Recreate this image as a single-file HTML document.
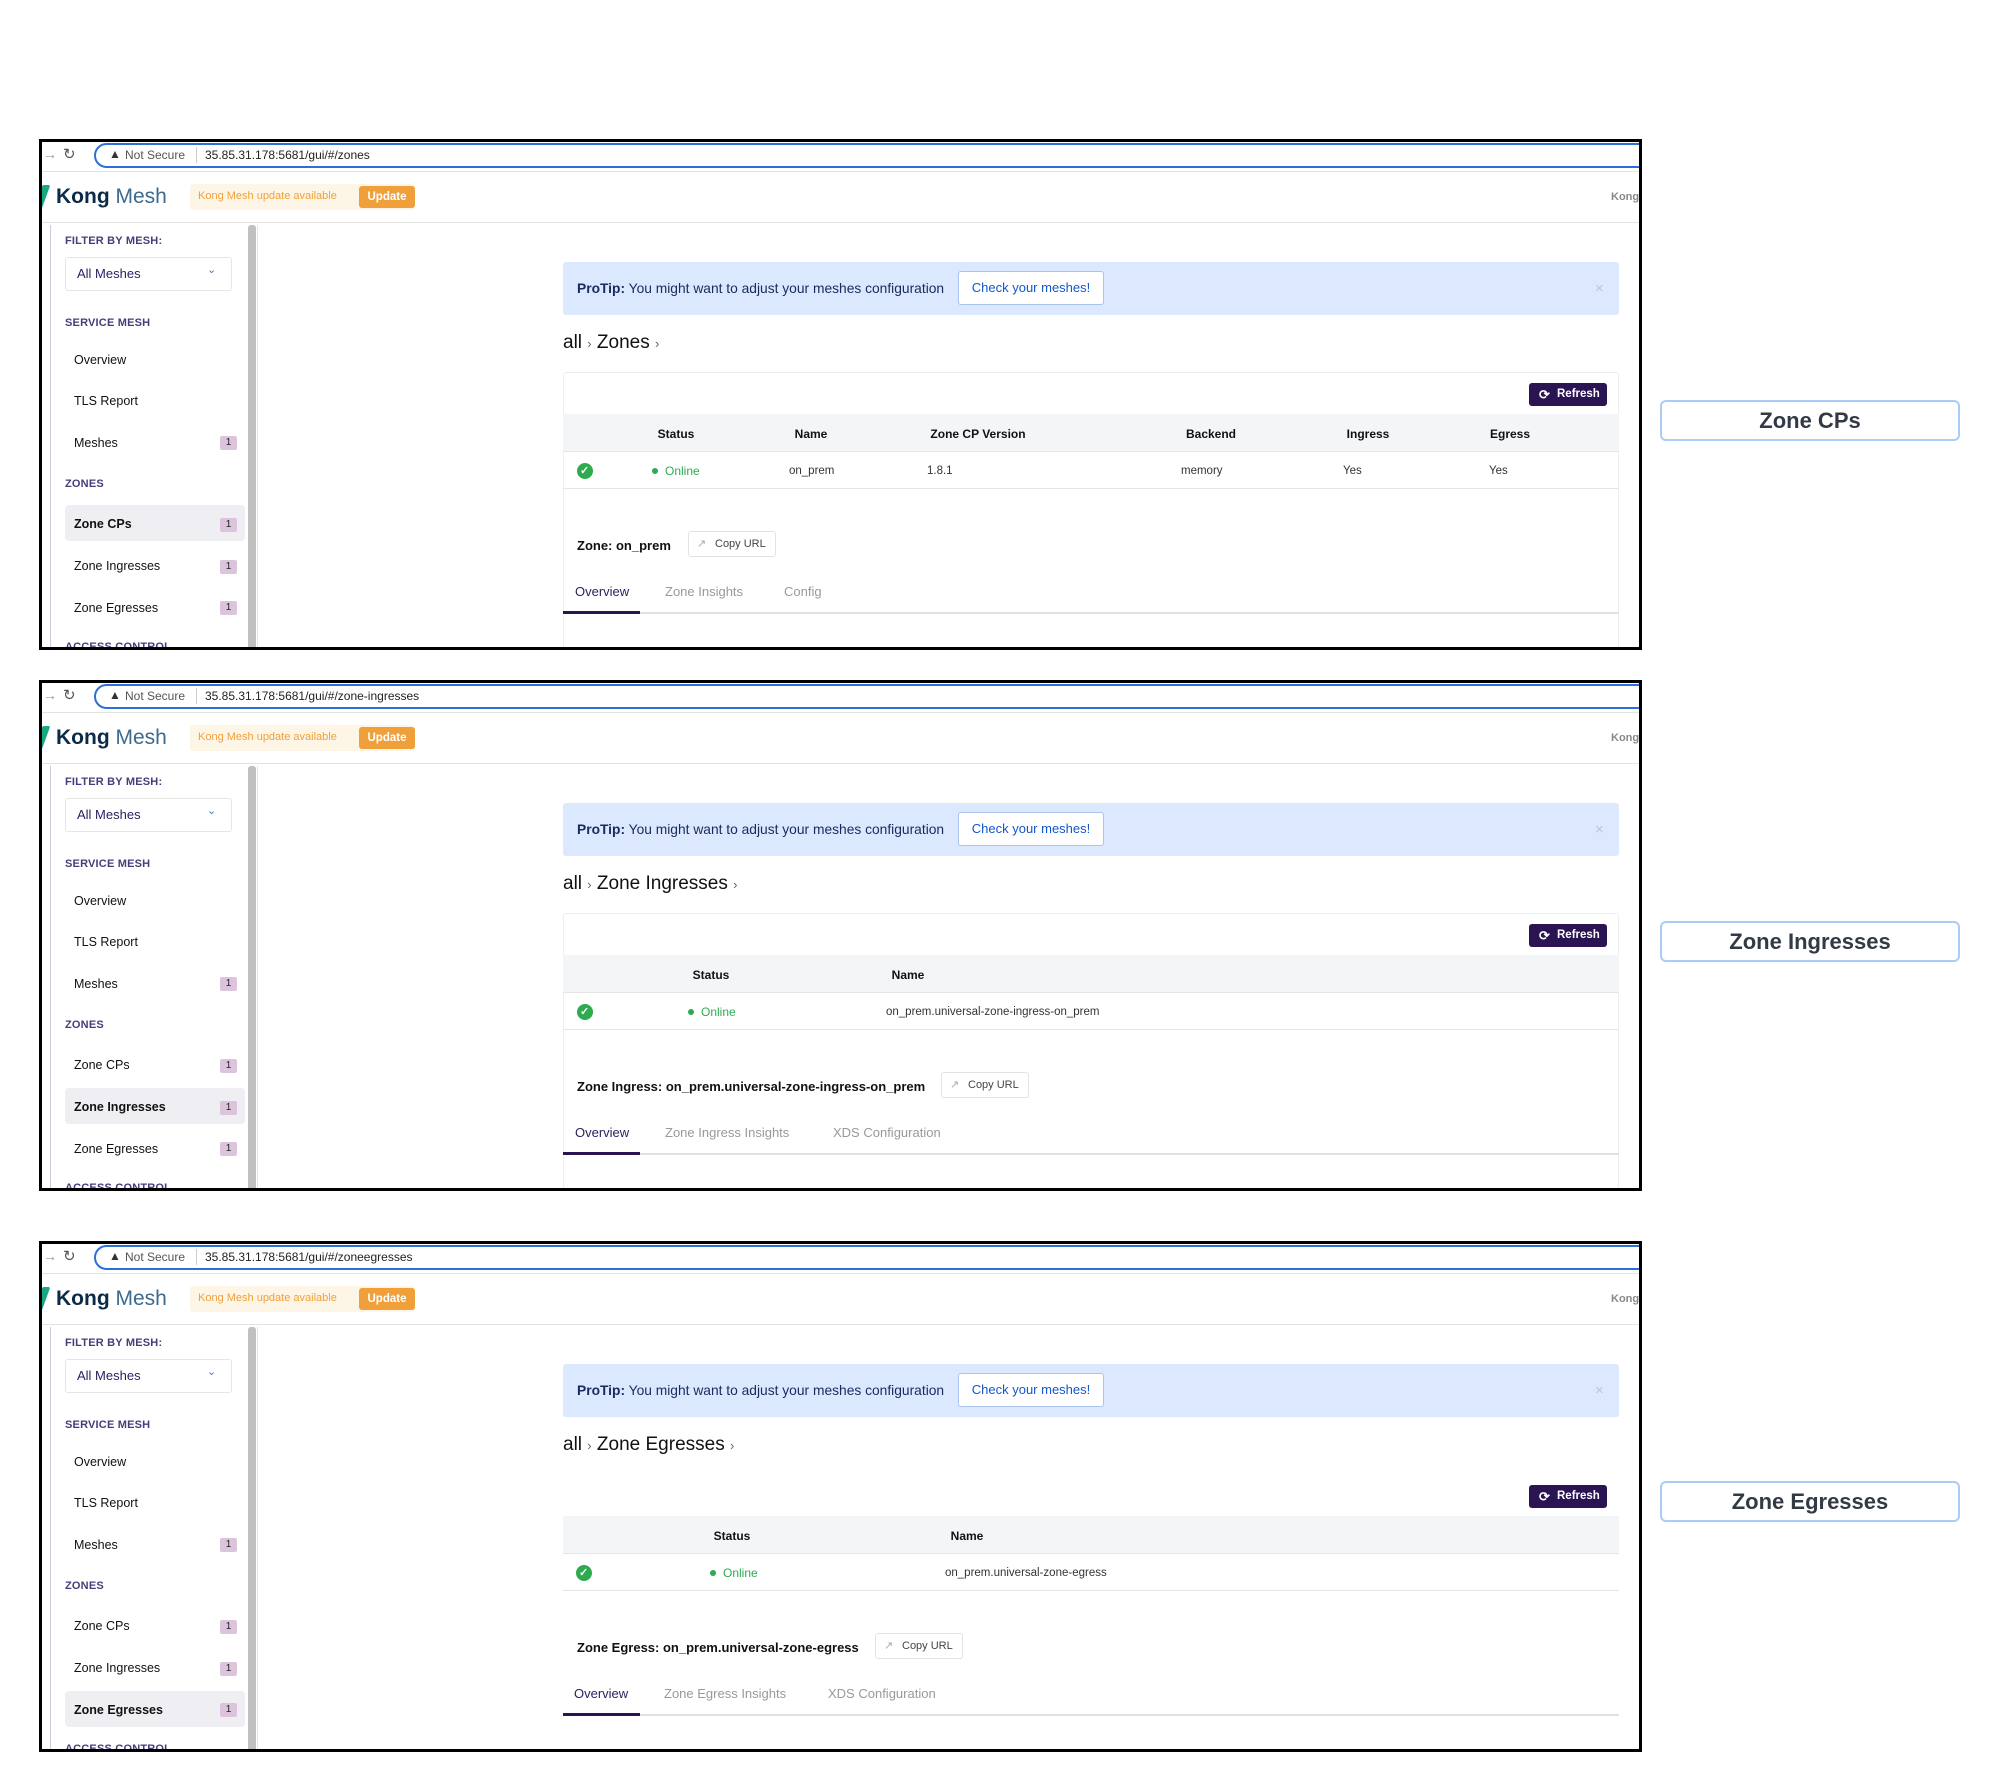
<!DOCTYPE html>
<html><head><meta charset="utf-8">
<style>
*{box-sizing:border-box;margin:0;padding:0}
html,body{width:2000px;height:1789px;background:#fff;overflow:hidden;font-family:"Liberation Sans",Arial,sans-serif;}
.p{position:absolute;left:39px;width:1603px;height:511px;background:#fff;overflow:hidden}
.p::after{content:"";position:absolute;left:0;top:0;right:0;bottom:0;border:3px solid #000;pointer-events:none}
.p > *{position:absolute;white-space:nowrap}
.ai{position:absolute}
.url{left:55px;top:4px;right:-10px;height:25px;border:2px solid #2d6fd8;border-radius:13px 0 0 13px;}
.urlt{left:166px;top:9px;font-size:12px;color:#222}
.ns{left:86px;top:9px;font-size:12px;color:#555}
.sep{left:157px;top:8px;width:1px;height:16px;background:#ccc}
.hl{left:0;right:0;height:1px;background:#e3e3e3}
.logo{left:17px;top:46px;font-size:21px;color:#0b2b48}
.ban{left:151px;top:45px;width:225px;height:26px;background:#fdf6e6;border-radius:3px}
.bant{left:159px;top:51px;font-size:11px;color:#f0a03a}
.upd{left:320px;top:47px;width:56px;height:22px;background:#f0a03a;color:#fff;font-size:11.5px;font-weight:bold;border-radius:3px;text-align:center;line-height:22px}
.kr{left:1572px;top:52px;font-size:11px;color:#888;font-weight:bold}
.sbl{left:11px;top:86px;width:1px;height:430px;background:#c8cde0}
.scr{left:209px;top:86px;width:8px;height:430px;background:#c0c0c0;border-radius:3px}
.scb{left:218px;top:86px;width:1px;height:430px;background:#e5e5e5}
.lab{left:26px;font-size:11px;color:#4a3b7a;font-weight:bold;letter-spacing:.2px}
.it{left:35px;font-size:12.5px;color:#111}
.act{left:26px;width:180px;height:36px;background:#efeff3;border-radius:4px}
.bd{left:181px;width:17px;height:14px;background:#dcc4dc;border-radius:2px;font-size:10px;text-align:center;line-height:14px;color:#222}
.sel{left:26px;top:118px;width:167px;height:34px;border:1px solid #e6e6e6;border-radius:3px}
.selt{left:38px;top:127px;font-size:13px;color:#2a1f5e}
.pro{left:524px;top:123px;width:1056px;height:53px;background:#dbe8fd;border-radius:3px}
.prot{left:538px;top:142px;font-size:13.8px;color:#1a2a5e}
.chk{left:919px;top:132px;width:146px;height:34px;background:#fff;border:1px solid #aac3ef;border-radius:3px;font-size:13px;color:#1456cb;text-align:center;line-height:32px}
.x{left:1556px;top:141px;font-size:15px;color:#b7c6dc}
.bc{left:524px;top:193px;font-size:19px;color:#111}
.card{left:524px;top:233px;width:1056px;height:300px;border:1px solid #eee;border-radius:3px}
.ref{left:1490px;top:244px;width:78px;height:23px;background:#2a1452;border-radius:3px;color:#fff;font-size:11.5px;font-weight:bold;line-height:23px;padding-left:28px}
.th{left:524px;top:275px;width:1056px;height:38px;background:#f4f5f7;border-bottom:1px solid #e6e6e6}
.tr{left:524px;top:313px;width:1056px;height:37px;border-bottom:1px solid #e6e6e6}
.h{top:288px;font-size:12px;font-weight:bold;color:#111;width:140px;text-align:center}
.d{top:326px;font-size:11.5px;color:#333}
.ok{left:538px;top:324px;width:16px;height:16px;border-radius:50%;background:#2eab4f}
.dot{top:329px;width:6px;height:6px;border-radius:50%;background:#2eab4f}
.on{top:325px;font-size:12px;color:#2eab4f}
.tt{left:538px;top:399px;font-size:13px;font-weight:bold;color:#111}
.cp{top:392px;height:26px;border:1px solid #e3e3e3;border-radius:3px;font-size:11px;color:#444;line-height:24px;padding-left:26px}
.tab{top:445px;font-size:13px;color:#999}
.tl{left:524px;top:473px;width:1056px;height:2px;background:#e1e1e1}
.ta{left:524px;top:472px;width:77px;height:3px;background:#2a1452}
.cap{position:absolute;left:1660px;width:300px;height:41px;border:2px solid #a9cdf7;border-radius:6px;font-size:22px;font-weight:bold;color:#333a45;text-align:center;line-height:37px}
.sm{font-size:13px;color:#666}
</style></head><body>

<div class="p" style="top:139px">
<div class="url"></div>
<div style="left:4px;top:7px;font-size:14px;color:#999">&#8594;</div>
<div style="left:24px;top:6px;font-size:15px;color:#555">&#8635;</div>
<div style="left:70px;top:8px;font-size:12px;color:#333">&#9650;</div>
<div class="ns">Not Secure</div><div class="sep"></div>
<div class="urlt">35.85.31.178:5681/gui/#/zones</div>
<div class="hl" style="top:32px"></div>
<div style="left:-1px;top:46px;width:8px;height:24px;background:#1aa881;transform:skew(-20deg);border-radius:2px"></div>
<div class="logo"><b>Kong</b> <span style="color:#3d6a8f">Mesh</span></div>
<div class="ban"></div><div class="bant">Kong Mesh update available</div><div class="upd">Update</div>
<div class="kr">Kong</div>
<div class="hl" style="top:83px"></div>
<div class="sbl"></div><div class="scr"></div><div class="scb"></div>
<div class="lab" style="top:96px">FILTER BY MESH:</div>
<div class="sel"></div><div class="selt">All Meshes</div><div style="left:168px;top:124px;font-size:11px;color:#3a7bd5">&#8964;</div>
<div class="lab" style="top:178px">SERVICE MESH</div>
<div class="it" style="top:214px">Overview</div>
<div class="it" style="top:255px">TLS Report</div>
<div class="it" style="top:297px">Meshes</div><div class="bd" style="top:297px">1</div>
<div class="lab" style="top:339px">ZONES</div>
<div class="act" style="top:366px"></div>
<div class="it" style="top:378px;font-weight:bold">Zone CPs</div><div class="bd" style="top:379px">1</div>
<div class="it" style="top:420px">Zone Ingresses</div><div class="bd" style="top:421px">1</div>
<div class="it" style="top:462px">Zone Egresses</div><div class="bd" style="top:462px">1</div>
<div class="lab" style="top:502px">ACCESS CONTROL</div>
<div class="pro"></div><div class="prot"><b>ProTip:</b> You might want to adjust your meshes configuration</div>
<div class="chk">Check your meshes!</div><div class="x">&#215;</div>
<div class="bc">all <span class="sm">&#8250;</span> Zones <span class="sm">&#8250;</span></div>
<div class="card"></div>
<div class="ref"><span class="ai" style="left:10px;top:0;font-size:13px">&#10227;</span>Refresh</div>
<div class="th"></div><div class="tr"></div>
<div class="h" style="left:567px">Status</div><div class="h" style="left:702px">Name</div><div class="h" style="left:869px">Zone CP Version</div><div class="h" style="left:1102px">Backend</div><div class="h" style="left:1259px">Ingress</div><div class="h" style="left:1401px">Egress</div>
<div class="ok"><span class="ai" style="left:3px;top:1px;font-size:11px;color:#fff;font-weight:bold">&#10003;</span></div>
<div class="dot" style="left:613px"></div><div class="on" style="left:626px">Online</div>
<div class="d" style="left:750px">on_prem</div><div class="d" style="left:888px">1.8.1</div><div class="d" style="left:1142px">memory</div><div class="d" style="left:1304px">Yes</div><div class="d" style="left:1450px">Yes</div>
<div class="tt">Zone: on_prem</div>
<div class="cp" style="left:649px;width:88px">Copy URL<span class="ai" style="left:8px;top:0;color:#aaa">&#8599;</span></div>
<div class="tab" style="left:536px;color:#2a1f5e">Overview</div><div class="tab" style="left:626px">Zone Insights</div><div class="tab" style="left:745px">Config</div>
<div class="tl"></div><div class="ta"></div>
</div>

<div class="p" style="top:680px">
<div class="url"></div>
<div style="left:4px;top:7px;font-size:14px;color:#999">&#8594;</div>
<div style="left:24px;top:6px;font-size:15px;color:#555">&#8635;</div>
<div style="left:70px;top:8px;font-size:12px;color:#333">&#9650;</div>
<div class="ns">Not Secure</div><div class="sep"></div>
<div class="urlt">35.85.31.178:5681/gui/#/zone-ingresses</div>
<div class="hl" style="top:32px"></div>
<div style="left:-1px;top:46px;width:8px;height:24px;background:#1aa881;transform:skew(-20deg);border-radius:2px"></div>
<div class="logo"><b>Kong</b> <span style="color:#3d6a8f">Mesh</span></div>
<div class="ban"></div><div class="bant">Kong Mesh update available</div><div class="upd">Update</div>
<div class="kr">Kong</div>
<div class="hl" style="top:83px"></div>
<div class="sbl"></div><div class="scr"></div><div class="scb"></div>
<div class="lab" style="top:96px">FILTER BY MESH:</div>
<div class="sel"></div><div class="selt">All Meshes</div><div style="left:168px;top:124px;font-size:11px;color:#3a7bd5">&#8964;</div>
<div class="lab" style="top:178px">SERVICE MESH</div>
<div class="it" style="top:214px">Overview</div>
<div class="it" style="top:255px">TLS Report</div>
<div class="it" style="top:297px">Meshes</div><div class="bd" style="top:297px">1</div>
<div class="lab" style="top:339px">ZONES</div>
<div class="act" style="top:408px"></div>
<div class="it" style="top:378px">Zone CPs</div><div class="bd" style="top:379px">1</div>
<div class="it" style="top:420px;font-weight:bold">Zone Ingresses</div><div class="bd" style="top:421px">1</div>
<div class="it" style="top:462px">Zone Egresses</div><div class="bd" style="top:462px">1</div>
<div class="lab" style="top:502px">ACCESS CONTROL</div>
<div class="pro"></div><div class="prot"><b>ProTip:</b> You might want to adjust your meshes configuration</div>
<div class="chk">Check your meshes!</div><div class="x">&#215;</div>
<div class="bc">all <span class="sm">&#8250;</span> Zone Ingresses <span class="sm">&#8250;</span></div>
<div class="card"></div>
<div class="ref"><span class="ai" style="left:10px;top:0;font-size:13px">&#10227;</span>Refresh</div>
<div class="th"></div><div class="tr"></div>
<div class="h" style="left:602px">Status</div><div class="h" style="left:799px">Name</div>
<div class="ok"><span class="ai" style="left:3px;top:1px;font-size:11px;color:#fff;font-weight:bold">&#10003;</span></div>
<div class="dot" style="left:649px"></div><div class="on" style="left:662px">Online</div>
<div class="d" style="left:847px">on_prem.universal-zone-ingress-on_prem</div>
<div class="tt">Zone Ingress: on_prem.universal-zone-ingress-on_prem</div>
<div class="cp" style="left:902px;width:88px">Copy URL<span class="ai" style="left:8px;top:0;color:#aaa">&#8599;</span></div>
<div class="tab" style="left:536px;color:#2a1f5e">Overview</div><div class="tab" style="left:626px">Zone Ingress Insights</div><div class="tab" style="left:794px">XDS Configuration</div>
<div class="tl"></div><div class="ta"></div>
</div>

<div class="p" style="top:1241px">
<div class="url"></div>
<div style="left:4px;top:7px;font-size:14px;color:#999">&#8594;</div>
<div style="left:24px;top:6px;font-size:15px;color:#555">&#8635;</div>
<div style="left:70px;top:8px;font-size:12px;color:#333">&#9650;</div>
<div class="ns">Not Secure</div><div class="sep"></div>
<div class="urlt">35.85.31.178:5681/gui/#/zoneegresses</div>
<div class="hl" style="top:32px"></div>
<div style="left:-1px;top:46px;width:8px;height:24px;background:#1aa881;transform:skew(-20deg);border-radius:2px"></div>
<div class="logo"><b>Kong</b> <span style="color:#3d6a8f">Mesh</span></div>
<div class="ban"></div><div class="bant">Kong Mesh update available</div><div class="upd">Update</div>
<div class="kr">Kong</div>
<div class="hl" style="top:83px"></div>
<div class="sbl"></div><div class="scr"></div><div class="scb"></div>
<div class="lab" style="top:96px">FILTER BY MESH:</div>
<div class="sel"></div><div class="selt">All Meshes</div><div style="left:168px;top:124px;font-size:11px;color:#3a7bd5">&#8964;</div>
<div class="lab" style="top:178px">SERVICE MESH</div>
<div class="it" style="top:214px">Overview</div>
<div class="it" style="top:255px">TLS Report</div>
<div class="it" style="top:297px">Meshes</div><div class="bd" style="top:297px">1</div>
<div class="lab" style="top:339px">ZONES</div>
<div class="act" style="top:450px"></div>
<div class="it" style="top:378px">Zone CPs</div><div class="bd" style="top:379px">1</div>
<div class="it" style="top:420px">Zone Ingresses</div><div class="bd" style="top:421px">1</div>
<div class="it" style="top:462px;font-weight:bold">Zone Egresses</div><div class="bd" style="top:462px">1</div>
<div class="lab" style="top:502px">ACCESS CONTROL</div>
<div class="pro"></div><div class="prot"><b>ProTip:</b> You might want to adjust your meshes configuration</div>
<div class="chk">Check your meshes!</div><div class="x">&#215;</div>
<div class="bc">all <span class="sm">&#8250;</span> Zone Egresses <span class="sm">&#8250;</span></div>
<div class="ref"><span class="ai" style="left:10px;top:0;font-size:13px">&#10227;</span>Refresh</div>
<div class="th"></div><div class="tr"></div>
<div class="h" style="left:623px">Status</div><div class="h" style="left:858px">Name</div>
<div class="ok" style="left:537px"><span class="ai" style="left:3px;top:1px;font-size:11px;color:#fff;font-weight:bold">&#10003;</span></div>
<div class="dot" style="left:671px"></div><div class="on" style="left:684px">Online</div>
<div class="d" style="left:906px">on_prem.universal-zone-egress</div>
<div class="tt">Zone Egress: on_prem.universal-zone-egress</div>
<div class="cp" style="left:836px;width:88px">Copy URL<span class="ai" style="left:8px;top:0;color:#aaa">&#8599;</span></div>
<div class="tab" style="left:535px;color:#2a1f5e">Overview</div><div class="tab" style="left:625px">Zone Egress Insights</div><div class="tab" style="left:789px">XDS Configuration</div>
<div class="tl"></div><div class="ta"></div>
</div>

<div class="cap" style="top:400px">Zone CPs</div>
<div class="cap" style="top:921px">Zone Ingresses</div>
<div class="cap" style="top:1481px">Zone Egresses</div>
</body></html>
